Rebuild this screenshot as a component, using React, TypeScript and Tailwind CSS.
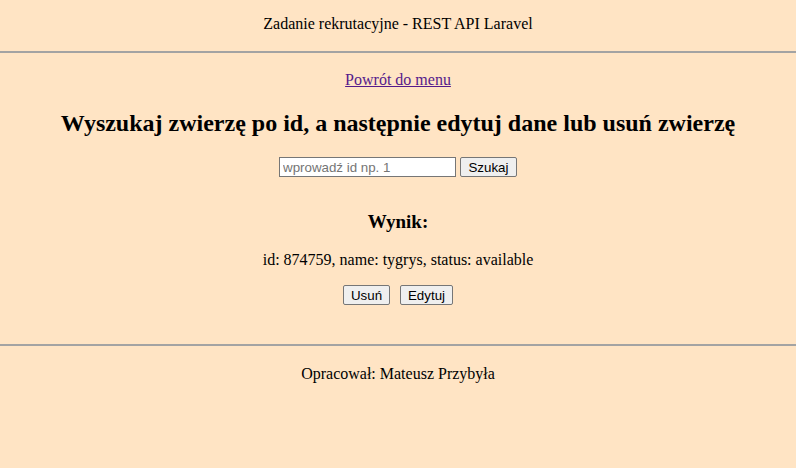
export default function App() {
  return (
    <div className="min-h-screen bg-[#ffe4c4] text-center text-black font-['Liberation_Serif',serif] text-[16px]">
      <header className="pt-[15px]">
        <p className="leading-[18px]">Zadanie rekrutacyjne - REST API Laravel</p>
      </header>
      <hr className="mt-[18px] border-0 border-t-2 border-t-[#a3a3a3]" />

      <main className="flex flex-col items-center">
        <a href="#" className="mt-[18px] leading-[18px] text-[#551a8b] underline">
          Powrót do menu
        </a>
        <h2 className="mt-[20px] text-[24px] font-bold leading-[28px]">
          Wyszukaj zwierzę po id, a następnie edytuj dane lub usuń zwierzę
        </h2>
        <div className="mt-[20px] flex items-center gap-[4px] font-['Liberation_Sans',sans-serif] text-[13.33px]">
          <input
            type="text"
            placeholder="wprowadź id np. 1"
            className="h-[20px] w-[177px] border border-[#767676] bg-white px-[3px] placeholder:text-[#757575]"
          />
          <button className="h-[20px] w-[57px] rounded-[2px] border border-[#767676] bg-[#efefef]">
            Szukaj
          </button>
        </div>

        <h3 className="mt-[34px] text-[19px] font-bold leading-[22px]">Wynik:</h3>
        <p className="mt-[18px] leading-[18px]">id: 874759, name: tygrys, status: available</p>
        <div className="mt-[16px] flex gap-[10px] font-['Liberation_Sans',sans-serif] text-[13.33px]">
          <button className="h-[20px] w-[47px] rounded-[2px] border border-[#767676] bg-[#efefef]">Usuń</button>
          <button className="h-[20px] w-[53px] rounded-[2px] border border-[#767676] bg-[#efefef]">Edytuj</button>
        </div>
      </main>

      <hr className="mt-[39px] border-0 border-t-2 border-t-[#a3a3a3]" />
      <footer>
        <p className="mt-[19px] leading-[18px]">Opracował: Mateusz Przybyła</p>
      </footer>
    </div>
  );
}
